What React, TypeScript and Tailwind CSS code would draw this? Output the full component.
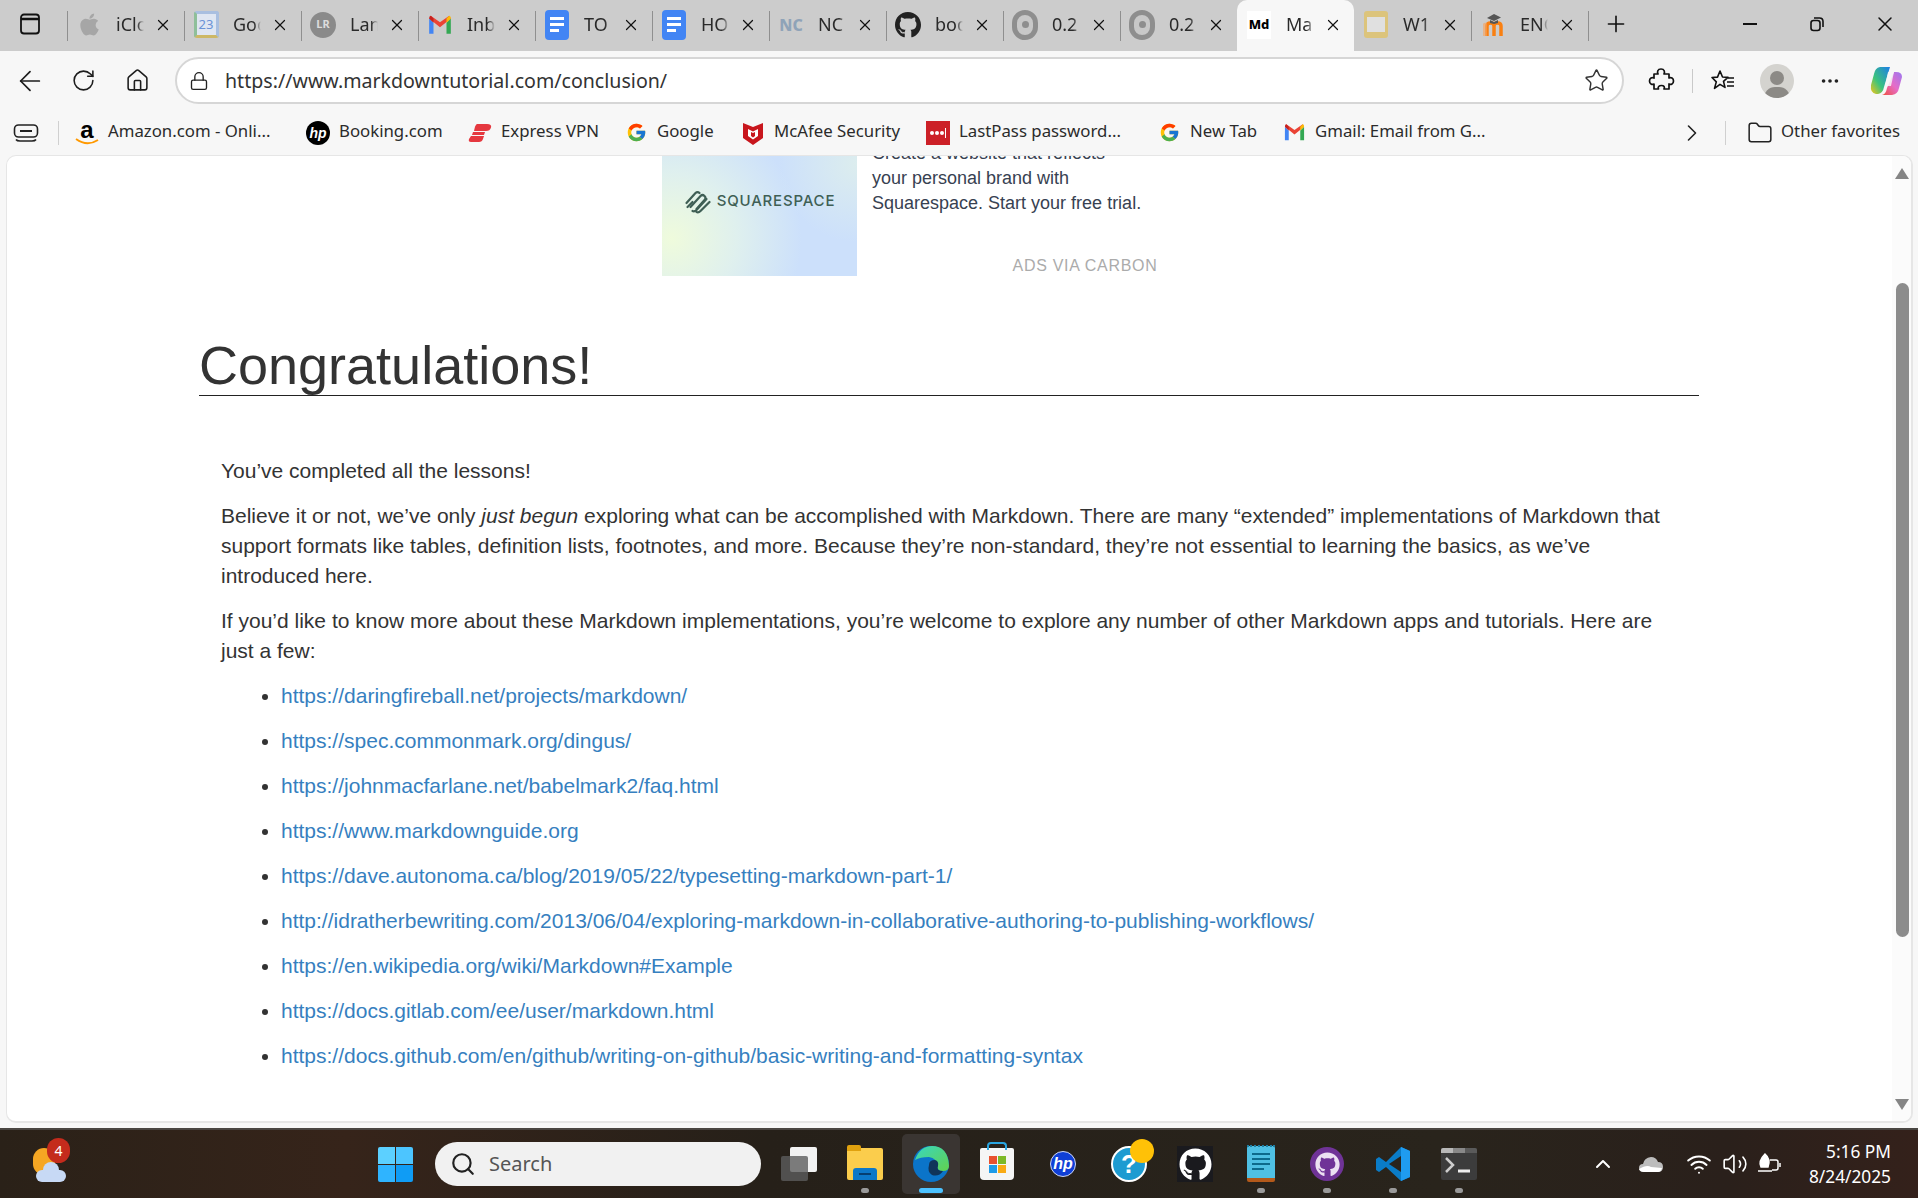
import type { ReactNode } from 'react';
import {
  ArrowLeft,
  ChevronRight,
  ChevronUp,
  Folder,
  Home,
  Lock,
  MoreHorizontal,
  Plus,
  RotateCw,
  Search,
  Star,
  Volume2,
  Wifi,
  X,
} from 'lucide-react';
import { FaApple, FaGithub } from 'react-icons/fa';
import { FcGoogle } from 'react-icons/fc';

const uiFont = "font-['Noto_Sans',sans-serif]";

function GmailIcon({ size = 24 }: { size?: number }) {
  return (
    <svg width={size} height={size} viewBox="0 0 24 24">
      <path d="M2 6v14h4V10z" fill="#4285f4" />
      <path d="M18 10v10h4V6z" fill="#34a853" />
      <path d="M2 6l10 8 10-8-1.5-2.5L12 9.500 3.500 3.500z" fill="#ea4335" />
      <path d="M18 6l2.500-2.500Q22 3.500 22 6l-4 4z" fill="#fbbc04" />
      <path d="M2 6Q2 3.500 3.500 3.500L6 6v4z" fill="#c5221f" />
    </svg>
  );
}

function DocsIcon() {
  return (
    <span className="flex h-[30px] w-[24px] flex-col justify-center gap-[3px] rounded-[4px] bg-[#4285f4] px-[5px]">
      <span className="h-[3px] bg-white" />
      <span className="h-[3px] bg-white" />
      <span className="h-[3px] w-[9px] bg-white" />
    </span>
  );
}

function RingIcon() {
  return (
    <span className="flex h-[30px] w-[26px] items-center justify-center rounded-full border-[5px] border-[#8e8e8e] bg-[#c8c8c8]">
      <span className="h-[7px] w-[7px] rounded-full bg-[#8e8e8e]" />
    </span>
  );
}

function MoodleIcon() {
  return (
    <svg width="24" height="26" viewBox="0 0 24 26">
      <path
        d="M6 24V14q0-3 3.500-3t3.500 3v10M13 14q0-3 3.500-3t3.500 3v10"
        fill="none"
        stroke="#f98012"
        strokeWidth="3.500"
      />
      <path d="M2 12q1-2 4-1v13H2z" fill="#f9a15a" opacity="0.6" />
      <path d="M6 6l7-4 7 3.500-7 3.500z" fill="#555" />
      <path d="M9 8v3l4 1 4-1V8l-4 2z" fill="#555" />
    </svg>
  );
}

function Tab({
  icon,
  title,
  active,
  noLine,
}: {
  icon: ReactNode;
  title: string;
  active?: boolean;
  noLine?: boolean;
}) {
  return (
    <div
      className={`relative flex h-full w-[117px] shrink-0 items-center pb-[2px] ${
        active ? 'rounded-t-[10px] bg-[#f7f7f7]' : ''
      }`}
    >
      {!active && !noLine && (
        <span className="absolute left-0 top-[11px] h-[30px] w-px bg-[#8f8f8f]" />
      )}
      <span className="ml-[9px] flex w-[26px] justify-center">{icon}</span>
      <span className="mb-[2px] ml-[14px] w-[28px] overflow-hidden whitespace-nowrap text-[18px] leading-none text-[#2a2a2a] [mask-image:linear-gradient(to_right,black_75%,transparent)]">
        {title}
      </span>
      <X size={18} strokeWidth={1.6} className="ml-[10px] text-[#111]" />
    </div>
  );
}

function TabStrip() {
  return (
    <div className="flex h-[51px] items-center bg-[#cccccc]">
      <div className="flex w-[67px] shrink-0 justify-center pb-[3px] pr-[7px]">
        <svg width="24" height="24" viewBox="0 0 24 24" fill="none" stroke="#111" strokeWidth="1.8">
          <rect x="3" y="2.500" width="18" height="19" rx="3" />
          <path d="M3 7h18" strokeWidth="2.500" />
        </svg>
      </div>
      <Tab icon={<FaApple size={25} className="text-[#a6a6a6]" />} title="iCloud" />
      <Tab
        icon={
          <span className="flex h-[27px] w-[25px] items-center justify-center rounded-[3px] border-[3px] border-[#a9bfe0] border-b-[#cdb866] border-l-[#8fbf9a] bg-[#dfe6f2] text-[13px] text-[#6b93d6]">
            23
          </span>
        }
        title="Google"
      />
      <Tab
        icon={
          <span className="flex h-[26px] w-[26px] items-center justify-center rounded-full bg-[#8a8a8a] text-[11px] font-bold text-[#dcdcdc]">
            LR
          </span>
        }
        title="Lan"
      />
      <Tab icon={<GmailIcon size={26} />} title="Inbox" />
      <Tab icon={<DocsIcon />} title="TO" />
      <Tab icon={<DocsIcon />} title="HO" />
      <Tab
        icon={<span className="text-[16px] font-extrabold leading-none text-[#8fa3b8]">NC</span>}
        title="NC"
      />
      <Tab icon={<FaGithub size={28} className="text-[#222]" />} title="bog" />
      <Tab icon={<RingIcon />} title="0.2" />
      <Tab icon={<RingIcon />} title="0.2" />
      <Tab
        active
        icon={
          <span className="flex h-[28px] w-[24px] items-center justify-center bg-white text-[13px] font-extrabold text-black">
            Md
          </span>
        }
        title="Markdown"
      />
      <Tab
        noLine
        icon={
          <span className="flex h-[27px] w-[24px] items-center justify-center rounded-[3px] bg-[#dcc47c]">
            <span className="h-[15px] w-[18px] bg-[#e0e0e0]" />
          </span>
        }
        title="W1"
      />
      <Tab icon={<MoodleIcon />} title="ENG" />
      <div className="relative flex h-full w-[50px] shrink-0 items-center pb-[3px] pl-[15px]">
        <span className="absolute left-0 top-[11px] h-[30px] w-px bg-[#8f8f8f]" />
        <Plus size={26} strokeWidth={1.5} className="text-[#111]" />
      </div>
      <div className="ml-auto flex items-center pb-[3px] pr-[21px]">
        <span className="h-[2px] w-[14px] bg-[#111]" />
        <svg width="18" height="18" viewBox="0 0 18 18" fill="none" stroke="#111" strokeWidth="1.6" className="ml-[51px]">
          <rect x="3" y="5.500" width="9" height="10" rx="2.500" />
          <path d="M6 3h5.500Q15 3 15 6.500V12" />
        </svg>
        <X size={24} strokeWidth={1.5} className="ml-[47px] text-[#111]" />
      </div>
    </div>
  );
}

function Toolbar() {
  return (
    <div className="flex h-[59px] items-center bg-[#f7f7f7]">
      <div className="flex w-[175px] shrink-0 items-center text-[#1d1d1d]">
        <ArrowLeft size={32} strokeWidth={1.3} className="ml-[14px]" />
        <RotateCw size={25} strokeWidth={1.5} className="ml-[25px]" />
        <Home size={25} strokeWidth={1.5} className="ml-[29px]" />
      </div>
      <div className="flex h-[47px] w-[1449px] shrink-0 items-center rounded-full border-2 border-[#d6d6d6] bg-white">
        <Lock size={20} strokeWidth={1.6} className="ml-[12px] text-[#222]" />
        <span className="ml-[16px] text-[19.6px] leading-none text-[#333]">
          https://www.markdowntutorial.com/conclusion/
        </span>
        <Star size={25} strokeWidth={1.4} className="ml-auto mr-[13px] text-[#333]" />
      </div>
      <svg width="27" height="27" viewBox="0 0 27 27" fill="none" stroke="#111" strokeWidth="1.7" strokeLinejoin="round" className="ml-[24px]">
        <path d="M6 7h4c-1-2-.5-5 3-5s4 3 3 5h5v4c2-1 4.500 0 4.500 3s-2.500 4-4.500 3v5h-5c1-2 0-3.500-2.500-3.500S9.500 20 10.500 22H6v-5c-2 1-4.500 0-4.500-3S4 10 6 11z" />
      </svg>
      <span className="ml-[17px] h-[24px] w-px bg-[#c9c9c9]" />
      <svg width="26" height="26" viewBox="0 0 26 26" fill="none" stroke="#111" strokeWidth="1.6" className="ml-[17px]">
        <path d="M10 3l2.500 6 5.500.4-4.500 4 1.500 6-5-3-5.500 4 1.800-6.500L2 9.500l5.500-.4z" strokeLinejoin="round" />
        <path d="M18 10h6M17 14h7M17 18h7" />
      </svg>
      <span className="ml-[24px] flex h-[34px] w-[34px] flex-col items-center justify-end overflow-hidden rounded-full bg-[#d4d3cf]">
        <span className="h-[14px] w-[14px] rounded-full bg-[#8c8a86]" />
        <span className="mt-[2px] h-[11px] w-[26px] rounded-t-full bg-[#8c8a86]" />
      </span>
      <MoreHorizontal size={22} strokeWidth={2} className="ml-[25px] text-[#222]" />
      <svg width="34" height="34" viewBox="0 0 34 34" className="ml-[28px]">
        <defs>
          <linearGradient id="cpa" x1="0" y1="1" x2="1" y2="0">
            <stop offset="0" stopColor="#f5c518" />
            <stop offset="0.4" stopColor="#3cc47c" />
            <stop offset="1" stopColor="#1c7ee8" />
          </linearGradient>
          <linearGradient id="cpb" x1="0" y1="1" x2="1" y2="0">
            <stop offset="0" stopColor="#f0503c" />
            <stop offset="0.5" stopColor="#e66cc8" />
            <stop offset="1" stopColor="#9c78f0" />
          </linearGradient>
        </defs>
        <path d="M11 3h10l-6 20q-1 6-6 7H7q-6-1-5-9l3-11q1-6 6-7z" fill="url(#cpa)" />
        <path d="M13 31h10q6-1 7-7l3-11q0-5-6-5h-2l-7 16q-1 6-5 7z" fill="url(#cpb)" />
        <path d="M19 8h6l-3 14h-6z" fill="#f7f7f7" opacity="0.85" />
      </svg>
    </div>
  );
}

function Bookmark({ icon, label, className }: { icon: ReactNode; label: string; className: string }) {
  return (
    <div className={`flex shrink-0 items-center ${className}`}>
      <span className="flex w-[24px] justify-center">{icon}</span>
      <span className="mb-[2px] ml-[9px] whitespace-nowrap text-[16.8px] leading-none text-[#2b2b2b]">{label}</span>
    </div>
  );
}

function BookmarksBar() {
  return (
    <div className="flex h-[45px] items-center bg-[#f7f7f7]">
      <svg width="26" height="20" viewBox="0 0 26 20" fill="none" stroke="#222" strokeWidth="1.6" className="ml-[13px] shrink-0">
        <rect x="1.500" y="2" width="23" height="12" rx="4" />
        <path d="M7 8h12" strokeWidth="2" />
        <path d="M3 16.500q1 1.500 4 1.500h12q3 0 4-1.500" />
      </svg>
      <span className="ml-[19px] h-[24px] w-px shrink-0 bg-[#d0d0d0]" />
      <div className="ml-[16px] flex items-center">
        <Bookmark
          className="w-[231px]"
          label="Amazon.com - Onli..."
          icon={
            <span className="relative flex h-[26px] w-[24px] justify-center">
              <span className="font-['Liberation_Sans',sans-serif] text-[24px] font-bold leading-[20px] text-black">a</span>
              <svg width="24" height="8" viewBox="0 0 24 8" className="absolute bottom-0 left-0">
                <path d="M1 1q11 8 22 1" fill="none" stroke="#f90" strokeWidth="1.800" />
              </svg>
            </span>
          }
        />
        <Bookmark
          className="w-[162px]"
          label="Booking.com"
          icon={
            <span className="flex h-[24px] w-[24px] items-center justify-center rounded-full bg-black font-['Liberation_Sans',sans-serif] text-[14px] font-bold italic leading-none text-white">
              hp
            </span>
          }
        />
        <Bookmark
          className="w-[156px]"
          label="Express VPN"
          icon={
            <svg width="24" height="20" viewBox="0 0 24 20">
              <path d="M9 1h10q5 0 4 3.500T18 8H6q1-6 3-7z" fill="#e5383f" />
              <path d="M5 9h12l-1 3H4z" fill="#e5383f" />
              <path d="M3 13h13l-1 3q-1 3-4 3H3q-3 0-2-3z" fill="#e5383f" />
            </svg>
          }
        />
        <Bookmark className="w-[117px]" label="Google" icon={<FcGoogle size={21} />} />
        <Bookmark
          className="w-[185px]"
          label="McAfee Security"
          icon={
            <svg width="22" height="26" viewBox="0 0 22 26">
              <path d="M1 3l10 4 10-4v15l-10 7-10-7z" fill="#c8161d" />
              <path d="M6 9l5 2.500L16 9v7l-5 3.500L6 16z" fill="#fff" />
              <path d="M9 12l2 1 2-1v4l-2 1.500L9 16z" fill="#c8161d" />
            </svg>
          }
        />
        <Bookmark
          className="w-[231px]"
          label="LastPass password..."
          icon={
            <span className="flex h-[24px] w-[24px] items-center justify-center gap-px bg-[#cc2027]">
              <span className="h-[4px] w-[4px] rounded-full bg-white" />
              <span className="h-[4px] w-[4px] rounded-full bg-white" />
              <span className="h-[4px] w-[4px] rounded-full bg-white" />
              <span className="h-[10px] w-px bg-white" />
            </span>
          }
        />
        <Bookmark className="w-[125px]" label="New Tab" icon={<FcGoogle size={21} />} />
        <Bookmark className="w-[230px]" label="Gmail: Email from G..." icon={<GmailIcon size={23} />} />
      </div>
      <ChevronRight size={28} strokeWidth={1.4} className="ml-[166px] shrink-0 text-[#222]" />
      <span className="ml-[19px] h-[24px] w-px shrink-0 bg-[#d0d0d0]" />
      <Folder size={26} strokeWidth={1.4} className="ml-[21px] shrink-0 text-[#222]" />
      <span className="mb-[2px] ml-[8px] whitespace-nowrap text-[16.8px] leading-none text-[#2b2b2b]">Other favorites</span>
    </div>
  );
}

function SquarespaceAd() {
  return (
    <div className="-mt-[30px] ml-[463px] flex font-['Liberation_Sans',sans-serif]">
      <div className="flex h-[150px] w-[195px] shrink-0 items-center justify-center gap-[5px] bg-[#cce0fb] bg-[radial-gradient(circle_at_5%_75%,#effbdc_0%,#dff0ee_30%,transparent_60%),radial-gradient(circle_at_100%_25%,#dcedee_0%,transparent_35%)] pt-[1px]">
        <svg width="28" height="24" viewBox="0 0 27 24" fill="none" stroke="#3f5f55" strokeWidth="2.200" strokeLinecap="round">
          <path d="M2 13L11 3q2-2 4 0" />
          <path d="M6 17L16 6q2-2 4 0t0 4l-8 9" />
          <path d="M8 21q2 1 4-1L22 9" />
          <path d="M12 22q2 1 4-1l9-9" />
          <path d="M3 17l5-5" />
        </svg>
        <span className="font-['Inter',sans-serif] text-[15px] font-medium tracking-[0.8px] text-[#3f5f55]">SQUARESPACE</span>
      </div>
      <div className="ml-[15px] flex h-[150px] w-[426px] flex-col pt-[15px] text-[18px] leading-[25px] text-[#374151]">
        <p>
          Create a website that reflects
          <br />
          your personal brand with
          <br />
          Squarespace. Start your free trial.
        </p>
        <p className="mt-auto text-center text-[16px] leading-[20px] tracking-[0.7px] text-[#ababab]">ADS VIA CARBON</p>
      </div>
    </div>
  );
}

const links = [
  'https://daringfireball.net/projects/markdown/',
  'https://spec.commonmark.org/dingus/',
  'https://johnmacfarlane.net/babelmark2/faq.html',
  'https://www.markdownguide.org',
  'https://dave.autonoma.ca/blog/2019/05/22/typesetting-markdown-part-1/',
  'http://idratherbewriting.com/2013/06/04/exploring-markdown-in-collaborative-authoring-to-publishing-workflows/',
  'https://en.wikipedia.org/wiki/Markdown#Example',
  'https://docs.gitlab.com/ee/user/markdown.html',
  'https://docs.github.com/en/github/writing-on-github/basic-writing-and-formatting-syntax',
];

function Page() {
  return (
    <div className="flex min-h-0 flex-1 bg-[#f7f7f7] pb-[5px] pl-[6px] pr-[5px]">
      <div className="flex flex-1 overflow-hidden rounded-[10px] border border-b-2 border-r-2 border-[#e6e6e6] bg-white">
        <main className="flex-1 overflow-hidden font-['Liberation_Sans',sans-serif] text-[#333]">
          <div className="ml-[192px] w-[1500px]">
            <SquarespaceAd />
            <h1 className="mt-[59px] border-b border-[#222] text-[54px] font-normal leading-[60px] text-[#333]">
              Congratulations!
            </h1>
            <div className="px-[22px] pt-[60px] text-[21px] leading-[30px]">
              <p className="mb-[15px]">You’ve completed all the lessons!</p>
              <p className="mb-[15px]">
                Believe it or not, we’ve only <em>just begun</em> exploring what can be accomplished with Markdown.
                There are many “extended” implementations of Markdown that support formats like tables, definition
                lists, footnotes, and more. Because they’re non-standard, they’re not essential to learning the basics,
                as we’ve introduced here.
              </p>
              <p className="mb-[15px]">
                If you’d like to know more about these Markdown implementations, you’re welcome to explore any number
                of other Markdown apps and tutorials. Here are just a few:
              </p>
              <ul className="list-disc pl-[60px]">
                {links.map((link) => (
                  <li key={link} className="mb-[15px]">
                    <a href="#" className="text-[#367fbf]">
                      {link}
                    </a>
                  </li>
                ))}
              </ul>
            </div>
          </div>
        </main>
        <div className="flex w-[19px] shrink-0 flex-col items-center bg-[#fbfbfb] pl-px pt-[12px]">
          <span className="h-0 w-0 border-x-[7px] border-b-[11px] border-x-transparent border-b-[#858585]" />
          <span className="mt-[104px] h-[654px] w-[13px] shrink-0 rounded-full bg-[#8c8c8c]" />
          <span className="mt-[162px] h-0 w-0 border-x-[7px] border-t-[11px] border-x-transparent border-t-[#858585]" />
        </div>
      </div>
    </div>
  );
}

function TaskItem({ children, dot, active }: { children: ReactNode; dot?: boolean; active?: boolean }) {
  return (
    <div className="relative flex h-[60px] w-[66px] shrink-0 items-center justify-center">
      {active && <span className="absolute inset-y-0 left-[4px] right-[4px] rounded-[5px] bg-[#3a3532]" />}
      <span className="relative flex items-center justify-center">{children}</span>
      {dot && <span className="absolute bottom-[1px] h-[5px] w-[8px] rounded-full bg-[#9a9a9a]" />}
      {active && <span className="absolute bottom-[1px] h-[5px] w-[24px] rounded-full bg-[#4cc2ff]" />}
    </div>
  );
}

function Taskbar() {
  return (
    <div className="flex h-[70px] shrink-0 items-center border-t-2 border-[#4a4642] bg-[linear-gradient(to_right,#2a2118_0%,#36241a_18%,#262019_40%,#29241c_75%,#2a201b_90%,#34211b_100%)] font-['Noto_Sans',sans-serif]">
      <div className="relative ml-[32px] h-[54px] w-[36px] shrink-0">
        <span className="absolute left-px top-[11px] h-[27px] w-[22px] rounded-full bg-[#f5a623]" />
        <span className="absolute bottom-[9px] left-[4px] h-[12px] w-[30px] rounded-full bg-[#c7d9f5]" />
        <span className="absolute bottom-[13px] left-[11px] h-[16px] w-[16px] rounded-full bg-[#c7d9f5]" />
        <span className="absolute left-[15px] top-px flex h-[25px] w-[23px] items-center justify-center rounded-full bg-[#c42b1c] text-[14px] leading-none text-white">
          4
        </span>
      </div>
      <div className="ml-[310px] grid h-[35px] w-[35px] shrink-0 grid-cols-2 gap-px">
        <span className="rounded-tl-[2px] bg-[#5cd0ff]" />
        <span className="rounded-tr-[2px] bg-[#4cc5ff]" />
        <span className="rounded-bl-[2px] bg-[#2fb4ff]" />
        <span className="rounded-br-[2px] bg-[#0f9cf5]" />
      </div>
      <div className="ml-[22px] flex h-[44px] w-[326px] shrink-0 items-center rounded-full bg-[#f1f1f1]">
        <Search size={26} strokeWidth={2} className="ml-[15px] text-[#222]" />
        <span className="ml-[13px] text-[20px] leading-none text-[#555]">Search</span>
      </div>
      <div className="ml-[5px] flex items-center">
        <TaskItem>
          <span className="relative h-[34px] w-[36px]">
            <span className="absolute right-0 top-0 h-[25px] w-[27px] rounded-[2px] bg-[#f2f2f2]" />
            <span className="absolute bottom-0 left-0 h-[25px] w-[27px] rounded-[2px] bg-[#5c5c5c] opacity-80" />
          </span>
        </TaskItem>
        <TaskItem dot>
          <span className="relative h-[32px] w-[36px] rounded-[2px] bg-[#fbcd4c]">
            <span className="absolute -top-[3px] left-0 h-[6px] w-[14px] rounded-t-[2px] bg-[#e0a10e]" />
            <span className="absolute bottom-0 left-[6px] h-[12px] w-[24px] rounded-t-[3px] bg-[#0d78c8]" />
            <span className="absolute bottom-[5px] left-[12px] h-[2px] w-[12px] bg-[#063f70]" />
          </span>
        </TaskItem>
        <TaskItem active>
          <svg width="38" height="38" viewBox="0 0 38 38">
            <defs>
              <linearGradient id="edg" x1="0" y1="0" x2="1" y2="1">
                <stop offset="0" stopColor="#38d6c0" />
                <stop offset="1" stopColor="#62d24e" />
              </linearGradient>
            </defs>
            <circle cx="19" cy="19" r="18" fill="#0b74c9" />
            <path d="M3 15Q8 1 20 1q16 0 17 20 0 5-6 5-6 0-6-5 0-8-8-9-9 0-14 3z" fill="url(#edg)" />
            <path d="M17 20q0-5 6-5 4 1 3 6-2 5 5 5-4 6-11 4-5-3-3-10z" fill="#10345a" />
          </svg>
        </TaskItem>
        <TaskItem>
          <span className="relative flex h-[32px] w-[34px] items-center justify-center rounded-b-[4px] rounded-t-[2px] bg-[#f5f5f5]">
            <span className="absolute -top-[6px] h-[8px] w-[20px] rounded-t-[4px] border-2 border-b-0 border-[#2aa5e0]" />
            <span className="grid grid-cols-2 gap-px">
              <span className="h-[8px] w-[8px] bg-[#e8512f]" />
              <span className="h-[8px] w-[8px] bg-[#7db928]" />
              <span className="h-[8px] w-[8px] bg-[#1e9be8]" />
              <span className="h-[8px] w-[8px] bg-[#f9aa14]" />
            </span>
          </span>
        </TaskItem>
        <TaskItem>
          <span className="flex h-[26px] w-[26px] items-center justify-center rounded-full border border-[#cfd8f5] bg-[#0f3fd6] font-['Liberation_Sans',sans-serif] text-[16px] font-bold italic leading-none text-white">
            hp
          </span>
        </TaskItem>
        <TaskItem>
          <span className="relative flex h-[36px] w-[36px] items-center justify-center rounded-full border-2 border-white bg-[#1d9bd1] font-['Liberation_Sans',sans-serif] text-[26px] font-bold leading-none text-white">
            ?
            <span className="absolute -right-[9px] -top-[9px] h-[24px] w-[24px] rounded-full bg-[#ffc107]" />
          </span>
        </TaskItem>
        <TaskItem>
          <span className="flex h-[36px] w-[36px] items-center justify-center bg-[#1a1a1e]">
            <FaGithub size={33} className="text-white" />
          </span>
        </TaskItem>
        <TaskItem dot>
          <span className="relative flex h-[36px] w-[28px] flex-col items-center justify-center gap-[3px] rounded-[2px] border-b-[4px] border-[#b3591a] bg-[#4fc0e4] pb-[1px]">
            <span className="absolute -top-px left-0 right-0 h-[2px] border-t-2 border-dotted border-[#1f7fa3]" />
            <span className="h-[2px] w-[18px] bg-[#0d6a8c]" />
            <span className="h-[2px] w-[18px] bg-[#0d6a8c]" />
            <span className="h-[2px] w-[18px] bg-[#0d6a8c]" />
            <span className="ml-[5px] h-[2px] w-[12px] self-start bg-[#0d6a8c]" />
          </span>
        </TaskItem>
        <TaskItem dot>
          <span className="flex h-[34px] w-[34px] items-center justify-center rounded-full bg-[#6f3397]">
            <FaGithub size={25} className="text-[#ebe0f2]" />
          </span>
        </TaskItem>
        <TaskItem dot>
          <svg width="36" height="36" viewBox="0 0 36 36">
            <path d="M26 1l9 4v26l-9 4-15-14-7 5-3-2V13l3-2 7 5z" fill="#0a7cc8" />
            <path d="M26 1l9 4v26l-9 4z" fill="#1f9cf0" />
            <path d="M26 10L14 18l12 8z" fill="#29231c" />
          </svg>
        </TaskItem>
        <TaskItem dot>
          <span className="relative flex h-[32px] w-[36px] flex-col overflow-hidden rounded-[2px] bg-[#3c3c3c]">
            <span className="flex h-[5px] w-full">
              <span className="w-1/3 bg-[#b8b8b8]" />
              <span className="w-1/3 bg-[#888]" />
              <span className="w-1/3 bg-[#5a5a5a]" />
            </span>
            <svg width="36" height="27" viewBox="0 0 36 27">
              <path d="M5 5l7 7-7 7" fill="none" stroke="#ccc" strokeWidth="2.500" />
              <path d="M17 18h12" stroke="#eee" strokeWidth="3" />
            </svg>
          </span>
        </TaskItem>
      </div>
      <div className="ml-auto flex items-center pr-[27px] text-white">
        <ChevronUp size={24} strokeWidth={2} />
        <svg width="26" height="18" viewBox="0 0 26 18" className="ml-[23px]">
          <path d="M6 17q-5 0-5-4t4-4q1-6 8-7 5 0 7 5 5 0 5 5t-5 5z" fill="#bcbcbc" />
          <path d="M1 14q8-5 12-2l11 1q-1 4-4 4H6q-4 0-5-3z" fill="#fff" />
        </svg>
        <Wifi size={26} strokeWidth={1.8} className="ml-[22px]" />
        <Volume2 size={26} strokeWidth={1.5} className="ml-[10px]" />
        <svg width="26" height="26" viewBox="0 0 26 26" fill="none" stroke="#fff" strokeWidth="1.5" className="ml-[8px]">
          <path d="M9 3q6 5 3 13H5Q2 10 9 3z" fill="#fff" />
          <path d="M2 20h14M14 9h6q2 0 2 2v6q0 2-2 2h-4" />
          <path d="M24 12v4" />
        </svg>
        <div className="ml-[27px] flex flex-col items-end text-[17.3px] leading-[25px]">
          <span>5:16 PM</span>
          <span>8/24/2025</span>
        </div>
      </div>
    </div>
  );
}

export default function App() {
  return (
    <div className={`flex h-[1198px] w-[1918px] flex-col overflow-hidden ${uiFont}`}>
      <TabStrip />
      <Toolbar />
      <BookmarksBar />
      <Page />
      <Taskbar />
    </div>
  );
}
